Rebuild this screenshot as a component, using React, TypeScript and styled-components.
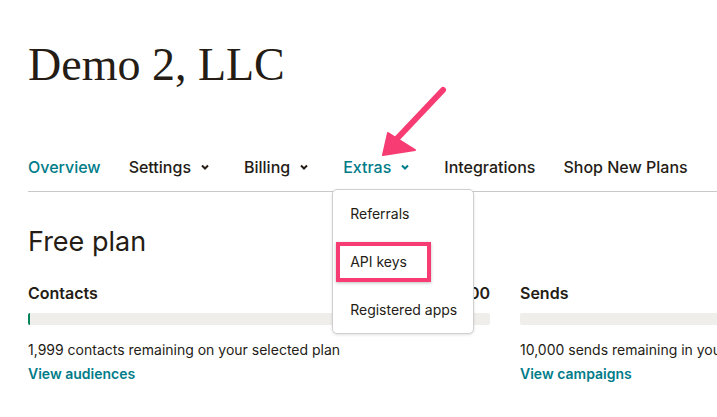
import styled, { createGlobalStyle } from 'styled-components';

const TEAL = '#007c89';
const INK = '#241c15';
const PINK = '#f63c73';

const GlobalStyle = createGlobalStyle`
  html, body {
    margin: 0;
    padding: 0;
    background: #fff;
    overflow: hidden;
  }
  body {
    font-family: Inter, "Liberation Sans", sans-serif;
    color: ${INK};
  }
`;

const Page = styled.div`
  position: relative;
  width: 717px;
  height: 417px;
  overflow: hidden;
  padding-left: 28px;
  box-sizing: border-box;
`;

const Title = styled.h1`
  margin: 0;
  padding-top: 37px;
  font-family: "Liberation Serif", serif;
  font-weight: 400;
  font-size: 46px;
  line-height: 56px;
  color: ${INK};
`;

const Nav = styled.nav`
  display: flex;
  align-items: center;
  gap: 28px;
  margin-top: 62px;
  padding-bottom: 12px;
  border-bottom: 1px solid #c9c9c9;
  width: 1000px;
`;

const NavItem = styled.div<{ $active?: boolean }>`
  position: relative;
  display: flex;
  align-items: center;
  gap: 9px;
  font-size: 16px;
  line-height: 24px;
  font-weight: 500;
  white-space: nowrap;
  color: ${(p) => (p.$active ? TEAL : INK)};
`;

const Chevron = styled.svg`
  width: 10px;
  height: 8px;
  margin-right: 6px;
`;

const Menu = styled.div`
  position: absolute;
  top: 34px;
  left: -11px;
  width: 142px;
  height: 145px;
  box-sizing: border-box;
  background: #fff;
  border: 1px solid #d0d0d0;
  border-radius: 5px;
  box-shadow: 0 1px 3px rgba(0, 0, 0, 0.12);
  display: flex;
  flex-direction: column;
  gap: 8px;
  padding: 4px 0 0 3px;
  z-index: 2;
`;

const MenuItem = styled.div<{ $marked?: boolean }>`
  flex-shrink: 0;
  width: 95px;
  height: 40px;
  box-sizing: border-box;
  display: flex;
  align-items: center;
  padding-left: 10px;
  font-size: 14px;
  font-weight: 400;
  color: ${INK};
  border: 4px solid ${(p) => (p.$marked ? PINK : 'transparent')};
  box-shadow: ${(p) => (p.$marked ? '0 1px 3px rgba(0,0,0,0.25)' : 'none')};
  white-space: nowrap;
`;

const PlanTitle = styled.h2`
  margin: 32px 0 0;
  font-size: 27px;
  line-height: 36px;
  font-weight: 400;
`;

const Stats = styled.div`
  display: grid;
  grid-template-columns: 462px 462px;
  column-gap: 30px;
  margin-top: 21px;
`;

const Stat = styled.div`
  display: flex;
  flex-direction: column;
`;

const StatHead = styled.div`
  display: flex;
  justify-content: space-between;
  font-size: 16px;
  line-height: 24px;
  font-weight: 600;
`;

const Bar = styled.div`
  margin-top: 8px;
  height: 12px;
  background: #efeeea;
  border-radius: 2px;
  overflow: hidden;
`;

const Fill = styled.div`
  height: 100%;
  background: #00865a;
`;

const StatText = styled.div`
  margin-top: 14px;
  font-size: 14px;
  line-height: 22px;
  white-space: nowrap;
`;

const StatLink = styled.a`
  margin-top: 1px;
  font-size: 14px;
  line-height: 24px;
  font-weight: 600;
  color: ${TEAL};
  text-decoration: none;
`;

const Arrow = styled.svg`
  position: absolute;
  left: 370px;
  top: 80px;
  width: 90px;
  height: 90px;
  z-index: 3;
`;

const Down = () => (
  <Chevron viewBox="0 0 10 8">
    <path d="M2 2.5 L5 5.5 L8 2.5" fill="none" stroke="currentColor" strokeWidth="2" />
  </Chevron>
);

const stats = [
  {
    label: 'Contacts',
    count: '1 / 2,000',
    fill: 0.004,
    text: '1,999 contacts remaining on your selected plan',
    link: 'View audiences',
  },
  {
    label: 'Sends',
    count: '0 / 10,000',
    fill: 0,
    text: '10,000 sends remaining in your billing period',
    link: 'View campaigns',
  },
];

export default function App() {
  return (
    <Page>
      <GlobalStyle />
      <Title>Demo 2, LLC</Title>
      <Nav>
        <NavItem $active>Overview</NavItem>
        <NavItem>
          Settings
          <Down />
        </NavItem>
        <NavItem>
          Billing
          <Down />
        </NavItem>
        <NavItem $active>
          Extras
          <Down />
          <Menu>
            <MenuItem>Referrals</MenuItem>
            <MenuItem $marked>API keys</MenuItem>
            <MenuItem>Registered apps</MenuItem>
          </Menu>
        </NavItem>
        <NavItem>Integrations</NavItem>
        <NavItem>Shop New Plans</NavItem>
      </Nav>
      <PlanTitle>Free plan</PlanTitle>
      <Stats>
        {stats.map((s) => (
          <Stat key={s.label}>
            <StatHead>
              <span>{s.label}</span>
              <span>{s.count}</span>
            </StatHead>
            <Bar>
              <Fill style={{ width: `${Math.max(s.fill * 100, s.fill > 0 ? 0.4 : 0)}%` }} />
            </Bar>
            <StatText>{s.text}</StatText>
            <StatLink href="#">{s.link}</StatLink>
          </Stat>
        ))}
      </Stats>
      <Arrow viewBox="0 0 90 90">
        <path d="M73 10 L20 66" stroke={PINK} strokeWidth="6" strokeLinecap="round" fill="none" />
        <path d="M13 75 L18 53 L45 70 Z" fill={PINK} stroke={PINK} strokeWidth="2" strokeLinejoin="round" />
      </Arrow>
    </Page>
  );
}
